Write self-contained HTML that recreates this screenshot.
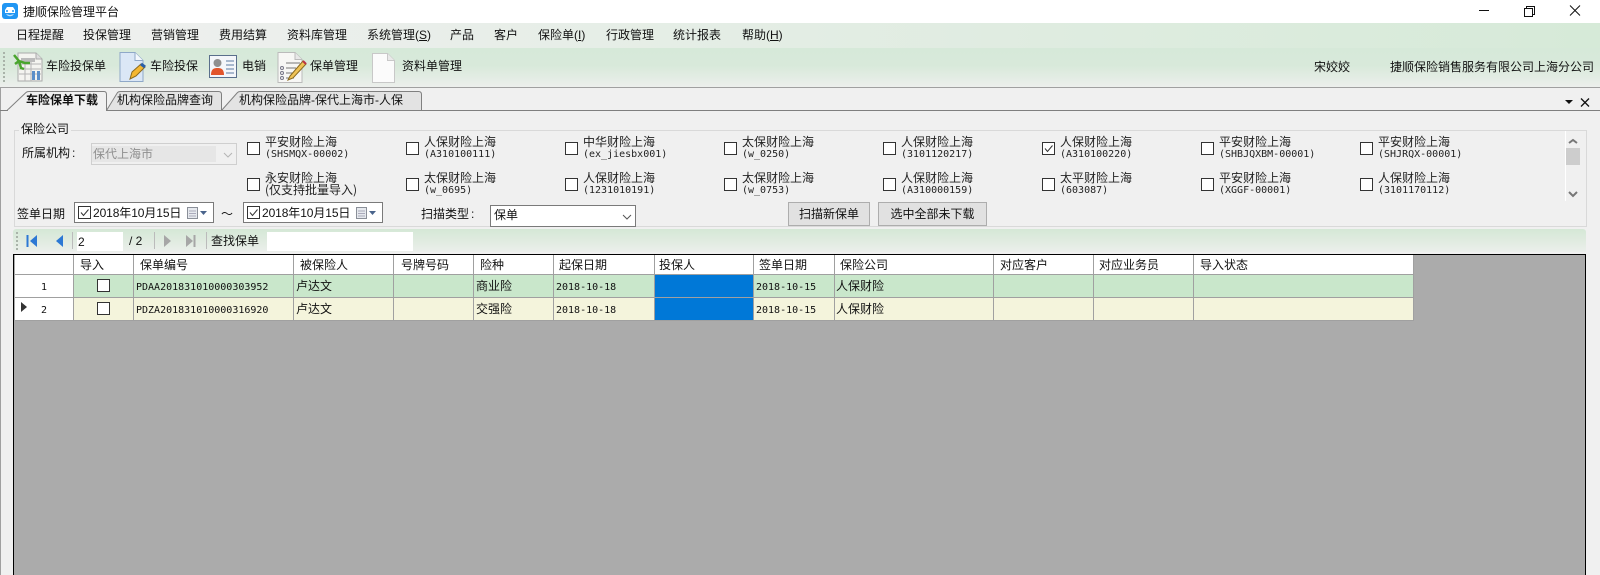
<!DOCTYPE html>
<html lang="zh"><head><meta charset="utf-8"><title>捷顺保险管理平台</title>
<style>
*{box-sizing:border-box}
html,body{margin:0;padding:0;width:1600px;height:575px;overflow:hidden;background:#f0f0f0}
body{position:relative;font:12px/14px "Liberation Sans","Noto Sans CJK SC",sans-serif;color:#111}
.a{position:absolute;white-space:nowrap}
.t{position:absolute;white-space:nowrap;line-height:14px;height:14px}
.cb{position:absolute;width:13px;height:13px;border:1px solid #333;background:#fff}
.n{position:absolute;white-space:nowrap;font:12px/12px "WenQuanYi Zen Hei","Noto Sans CJK SC",sans-serif;color:#222}
.c{position:absolute;white-space:nowrap;font:10px/12px "DejaVu Sans Mono","Liberation Mono",monospace;color:#222;margin-top:1px}
.v{position:absolute;top:255px;width:1px;height:66px;background:#a0a0a0}
.g{position:absolute;white-space:nowrap;font-size:12px;line-height:14px;color:#111}
.m{position:absolute;white-space:nowrap;font:10px/14px "DejaVu Sans Mono","Liberation Mono",monospace;color:#111;margin-top:2px}
svg{position:absolute;overflow:visible}
</style></head><body>

<!-- title bar -->
<div class="a" style="left:0;top:0;width:1600px;height:23px;background:#fff"></div>
<svg style="left:2px;top:3px" width="16" height="16" viewBox="0 0 16 16"><rect width="16" height="16" rx="3" fill="#2196f3"/><path d="M3 7l2-3h6l2 3v3H3z" fill="#fff"/><path d="M4 11c2 3 6 3 8 0l-4 1z" fill="#bfe3ff"/><circle cx="5" cy="8" r="1" fill="#2196f3"/><circle cx="11" cy="8" r="1" fill="#2196f3"/></svg>
<div class="t" style="left:23px;top:5px">捷顺保险管理平台</div>
<svg style="left:1478px;top:5px" width="110" height="12" fill="none" stroke="#111"><path d="M1 5.500H11"/><path d="M46.500 3.500h8v8h-8zM48.500 3.500v-2h8v8h-2"/><path d="M92 .5l10 10M102 .5l-10 10"/></svg>

<!-- menu -->
<div class="a" style="left:0;top:23px;width:1600px;height:25px;background:linear-gradient(90deg,#f0f0f0 0,#d6ead8 100%)"></div>
<div class="t" style="left:16px;top:28px">日程提醒</div>
<div class="t" style="left:83px;top:28px">投保管理</div>
<div class="t" style="left:151px;top:28px">营销管理</div>
<div class="t" style="left:219px;top:28px">费用结算</div>
<div class="t" style="left:287px;top:28px">资料库管理</div>
<div class="t" style="left:367px;top:28px">系统管理(<u>S</u>)</div>
<div class="t" style="left:450px;top:28px">产品</div>
<div class="t" style="left:494px;top:28px">客户</div>
<div class="t" style="left:538px;top:28px">保险单(<u>I</u>)</div>
<div class="t" style="left:606px;top:28px">行政管理</div>
<div class="t" style="left:673px;top:28px">统计报表</div>
<div class="t" style="left:742px;top:28px">帮助(<u>H</u>)</div>

<!-- toolbar -->
<div class="a" style="left:0;top:48px;width:1600px;height:39px;background:linear-gradient(180deg,#d6e9d9 0,#d8e9da 45%,#ecefec 100%)"></div>
<div class="a" style="left:0;top:87px;width:1600px;height:1px;background:#a0a0a0"></div>
<div class="a" style="left:3px;top:52px;width:2px;height:31px;background:repeating-linear-gradient(180deg,#a9b3a9 0 2px,transparent 2px 4px)"></div>

<svg style="left:12px;top:51px" width="32" height="32" viewBox="0 0 32 32"><path d="M6 2h18l6 6v22H6z" fill="#f4f4f0" stroke="#aaa"/><path d="M24 2v6h6" fill="#ddd" stroke="#aaa"/><path d="M7 13h22M7 18h22M7 23h22M13 9v21M19 9v21" stroke="#b5b5b5"/><rect x="9" y="7" width="14" height="4" fill="#bbb"/><rect x="20" y="20" width="3" height="9" fill="#5b8fc9"/><rect x="25" y="20" width="3" height="9" fill="#5b8fc9"/><path d="M2 4l5 6 6 2 5 0M3 13l4-3M7 10l2 7 3 1" fill="none" stroke="#4aa52e" stroke-width="2.500"/></svg>
<div class="t" style="left:46px;top:59px">车险投保单</div>

<svg style="left:119px;top:52px" width="26" height="31" viewBox="0 0 26 31"><path d="M1 .5h15l8 8v21H1z" fill="#dbe7f6" stroke="#8fa8c8"/><path d="M16 .5v8h8" fill="#f4f8fd" stroke="#8fa8c8"/><path d="M13 20l9-8 4 3-9 9-6 3z" fill="#f4b731" stroke="#8a6a1e"/><path d="M22 12l4 3" stroke="#2a5fa8" stroke-width="3"/></svg>
<div class="t" style="left:150px;top:59px">车险投保</div>

<svg style="left:209px;top:55px" width="28" height="23" viewBox="0 0 28 23"><rect x=".5" y=".5" width="27" height="22" fill="#f4f6fa" stroke="#5a6f8c"/><circle cx="8.500" cy="8" r="4" fill="#8f8f8f"/><path d="M2 20c0-6 3-7 6.500-7s6.500 1 6.500 7z" fill="#e2552b"/><path d="M17 6h8M17 10h8M17 14h8M17 18h8" stroke="#7b93b4" stroke-width="1.300"/></svg>
<div class="t" style="left:242px;top:59px">电销</div>

<svg style="left:277px;top:52px" width="31" height="31" viewBox="0 0 31 31"><path d="M1 .5h17l7 7v23H1z" fill="#f7f7f5" stroke="#bbb"/><path d="M18 .5v7h7" fill="#e8e8e8" stroke="#bbb"/><path d="M9 11h14M9 16h10M9 21h8M9 26h8" stroke="#777"/><circle cx="5" cy="16" r="1.500" fill="none" stroke="#778"/><circle cx="5" cy="21" r="1.500" fill="none" stroke="#778"/><circle cx="5" cy="26" r="1.500" fill="none" stroke="#778"/><path d="M13 24l13-15 3 3-13 14-5 2z" fill="#efc356" stroke="#8a6a1e"/><path d="M26 9l3 3" stroke="#b34" stroke-width="2"/></svg>
<div class="t" style="left:310px;top:59px">保单管理</div>

<svg style="left:372px;top:53px" width="23" height="30" viewBox="0 0 23 30"><path d="M.5 .5h15l7 7v22H.5z" fill="#fbfbfb" stroke="#c8c8c8"/><path d="M15.500 .5v7h7" fill="#e9e9e9" stroke="#c8c8c8"/></svg>
<div class="t" style="left:402px;top:59px">资料单管理</div>

<div class="t" style="left:1314px;top:60px">宋姣姣</div>
<div class="t" style="left:1390px;top:60px">捷顺保险销售服务有限公司上海分公司</div>

<!-- tabs -->
<div class="a" style="left:0;top:88px;width:1px;height:487px;background:#a0a0a0"></div>
<div class="a" style="left:0;top:110px;width:1600px;height:1px;background:#7f7f7f"></div>
<svg style="left:0;top:88px" width="440" height="24" fill="none">
<path d="M221.500 22.500l16-18q1-1 3-1h178q3 0 3 3v16z" fill="#e3e3e3" stroke="#808080"/>
<path d="M106.500 22.500l11-18q1-1 3-1h98q3 0 3 3v16z" fill="#e3e3e3" stroke="#808080"/>
<path d="M7 22.500l19-18q1-1 3-1h75q2.500 0 2.500 3v16.500" fill="#f0f0f0" stroke="#808080"/>
<path d="M8 22.500h98" stroke="#f0f0f0" stroke-width="1.500"/>
</svg>
<div class="t" style="left:26px;top:93px;font-weight:bold">车险保单下载</div>
<div class="t" style="left:117px;top:93px">机构保险品牌查询</div>
<div class="t" style="left:239px;top:93px">机构保险品牌-保代上海市-人保</div>
<svg style="left:1565px;top:98px" width="30" height="12"><path d="M0 2h8L4 6z" fill="#111"/><path d="M16 .5l8 8M24 .5l-8 8" stroke="#111" stroke-width="1.300" fill="none"/></svg>

<!-- group box -->
<div class="a" style="left:14px;top:130px;width:1573px;height:97px;border:1px solid #d9d9d9"></div>
<div class="a" style="left:19px;top:122px;background:#f0f0f0;padding:0 2px;line-height:15px">保险公司</div>
<div class="t" style="left:22px;top:146px">所属机构<span style="margin-left:2px">:</span></div>
<div class="a" style="left:91px;top:143px;width:146px;height:22px;border:1px solid #cfcfcf;background:#f0f0f0"></div>
<div class="a" style="left:92px;top:146px;width:124px;height:16px;background:#e6e6e6;color:#8f8f8f;line-height:16px;padding-left:1px">保代上海市</div>
<svg style="left:223px;top:152px" width="10" height="6" fill="none" stroke="#b5b5b5"><path d="M1 1l4 4 4-4"/></svg>

<!-- checkbox row 1 -->
<div class="cb" style="left:247px;top:142px"></div><div class="n" style="left:265px;top:136px">平安财险上海</div><div class="c" style="left:265px;top:148px">(SHSMQX-00002)</div>
<div class="cb" style="left:406px;top:142px"></div><div class="n" style="left:424px;top:136px">人保财险上海</div><div class="c" style="left:424px;top:148px">(A310100111)</div>
<div class="cb" style="left:565px;top:142px"></div><div class="n" style="left:583px;top:136px">中华财险上海</div><div class="c" style="left:583px;top:148px">(ex_jiesbx001)</div>
<div class="cb" style="left:724px;top:142px"></div><div class="n" style="left:742px;top:136px">太保财险上海</div><div class="c" style="left:742px;top:148px">(w_0250)</div>
<div class="cb" style="left:883px;top:142px"></div><div class="n" style="left:901px;top:136px">人保财险上海</div><div class="c" style="left:901px;top:148px">(3101120217)</div>
<div class="cb" style="left:1042px;top:142px"></div><svg style="left:1042px;top:142px" width="13" height="13" fill="none" stroke="#333"><path d="M3 6.500l2.500 3 5-6"/></svg><div class="n" style="left:1060px;top:136px">人保财险上海</div><div class="c" style="left:1060px;top:148px">(A310100220)</div>
<div class="cb" style="left:1201px;top:142px"></div><div class="n" style="left:1219px;top:136px">平安财险上海</div><div class="c" style="left:1219px;top:148px">(SHBJQXBM-00001)</div>
<div class="cb" style="left:1360px;top:142px"></div><div class="n" style="left:1378px;top:136px">平安财险上海</div><div class="c" style="left:1378px;top:148px">(SHJRQX-00001)</div>

<!-- checkbox row 2 -->
<div class="cb" style="left:247px;top:178px"></div><div class="n" style="left:265px;top:172px">永安财险上海</div><div class="n" style="left:265px;top:184px">(仅支持批量导入)</div>
<div class="cb" style="left:406px;top:178px"></div><div class="n" style="left:424px;top:172px">太保财险上海</div><div class="c" style="left:424px;top:184px">(w_0695)</div>
<div class="cb" style="left:565px;top:178px"></div><div class="n" style="left:583px;top:172px">人保财险上海</div><div class="c" style="left:583px;top:184px">(1231010191)</div>
<div class="cb" style="left:724px;top:178px"></div><div class="n" style="left:742px;top:172px">太保财险上海</div><div class="c" style="left:742px;top:184px">(w_0753)</div>
<div class="cb" style="left:883px;top:178px"></div><div class="n" style="left:901px;top:172px">人保财险上海</div><div class="c" style="left:901px;top:184px">(A310000159)</div>
<div class="cb" style="left:1042px;top:178px"></div><div class="n" style="left:1060px;top:172px">太平财险上海</div><div class="c" style="left:1060px;top:184px">(603087)</div>
<div class="cb" style="left:1201px;top:178px"></div><div class="n" style="left:1219px;top:172px">平安财险上海</div><div class="c" style="left:1219px;top:184px">(XGGF-00001)</div>
<div class="cb" style="left:1360px;top:178px"></div><div class="n" style="left:1378px;top:172px">人保财险上海</div><div class="c" style="left:1378px;top:184px">(3101170112)</div>

<!-- scrollbar -->
<div class="a" style="left:1565px;top:131px;width:1px;height:70px;background:#fff"></div>
<div class="a" style="left:1566px;top:148px;width:14px;height:17px;background:#cdcdcd"></div>
<svg style="left:1568px;top:138px" width="10" height="62" fill="none" stroke="#777" stroke-width="2"><path d="M1 5l4-3 4 3M1 54l4 4 4-4"/></svg>

<!-- dates -->
<div class="t" style="left:17px;top:207px;font-size:12px">签单日期</div>
<div class="a" style="left:74px;top:202px;width:140px;height:21px;border:1px solid #7a7a7a;background:#fff"></div>
<div class="cb" style="left:78px;top:206px"></div><svg style="left:78px;top:206px" width="13" height="13" fill="none" stroke="#333"><path d="M3 6.500l2.500 3 5-6"/></svg>
<div class="t" style="left:93px;top:206px;letter-spacing:-.1px">2018年10月15日</div>
<svg style="left:187px;top:207px" width="21" height="12"><rect x=".5" y=".5" width="10" height="11" fill="#e6e9ee" stroke="#8a8f98"/><path d="M2 4h7M2 6.500h7M2 9h7" stroke="#aab"/><path d="M13 4h7l-3.500 4z" fill="#4a648c"/></svg>
<div class="t" style="left:221px;top:207px">～</div>
<div class="a" style="left:243px;top:202px;width:140px;height:21px;border:1px solid #7a7a7a;background:#fff"></div>
<div class="cb" style="left:247px;top:206px"></div><svg style="left:247px;top:206px" width="13" height="13" fill="none" stroke="#333"><path d="M3 6.500l2.500 3 5-6"/></svg>
<div class="t" style="left:262px;top:206px;letter-spacing:-.1px">2018年10月15日</div>
<svg style="left:356px;top:207px" width="21" height="12"><rect x=".5" y=".5" width="10" height="11" fill="#e6e9ee" stroke="#8a8f98"/><path d="M2 4h7M2 6.500h7M2 9h7" stroke="#aab"/><path d="M13 4h7l-3.500 4z" fill="#4a648c"/></svg>

<div class="t" style="left:421px;top:207px">扫描类型<span style="margin-left:2px">:</span></div>
<div class="a" style="left:490px;top:205px;width:146px;height:22px;border:1px solid #7a7a7a;background:#fff;padding:2px 0 0 3px">保单</div>
<svg style="left:622px;top:214px" width="10" height="6" fill="none" stroke="#555"><path d="M1 1l4 4 4-4"/></svg>

<div class="a" style="left:788px;top:202px;width:82px;height:24px;border:1px solid #adadad;background:#e1e1e1;text-align:center;line-height:22px">扫描新保单</div>
<div class="a" style="left:878px;top:202px;width:109px;height:24px;border:1px solid #adadad;background:#e1e1e1;text-align:center;line-height:22px">选中全部未下载</div>

<!-- nav -->
<div class="a" style="left:13px;top:229px;width:1573px;height:23px;border-radius:3px 3px 0 0;background:linear-gradient(180deg,#d4e8d6 0,#e0ebe0 50%,#ebefeb 100%)"></div>
<div class="a" style="left:16px;top:232px;width:2px;height:18px;background:repeating-linear-gradient(180deg,#a9b3a9 0 2px,transparent 2px 4px)"></div>
<svg style="left:26px;top:234px" width="172" height="14"><path d="M1.500 1v12" stroke="#2c78d4" stroke-width="2"/><path d="M11 1v12L4 7z" fill="#2c78d4"/><path d="M37 1v12L30 7z" fill="#2c78d4"/><path d="M46.500 -2v17M128.500 -2v17M180.500 -2v17" stroke="#bbb"/><path d="M138 1v12l7-6z" fill="#a6a6a6"/><path d="M160 1v12l7-6z" fill="#a6a6a6"/><path d="M168.500 1v12" stroke="#a6a6a6" stroke-width="2"/></svg>
<div class="a" style="left:77px;top:232px;width:46px;height:19px;background:#fff;padding:3px 0 0 1px;font-size:12px">2</div>
<div class="t" style="left:129px;top:234px">/ 2</div>
<div class="t" style="left:211px;top:234px">查找保单</div>
<div class="a" style="left:267px;top:232px;width:146px;height:19px;background:#fff"></div>

<!-- grid -->
<div class="a" style="left:13px;top:254px;width:1573px;height:321px;background:#ababab;border:1px solid #000;border-width:1px 1px 0 1px"></div>
<div class="a" style="left:15px;top:255px;width:1398px;height:19px;background:#fff"></div>
<div class="a" style="left:15px;top:274px;width:58px;height:47px;background:#fff"></div>
<div class="a" style="left:73px;top:275px;width:1340px;height:22px;background:#c9e7cb"></div>
<div class="a" style="left:73px;top:298px;width:1340px;height:22px;background:#f4f4dc"></div>
<div class="a" style="left:15px;top:274px;width:1398px;height:1px;background:#a0a0a0"></div>
<div class="a" style="left:15px;top:297px;width:1398px;height:1px;background:#a0a0a0"></div>
<div class="a" style="left:15px;top:320px;width:1398px;height:1px;background:#a0a0a0"></div>
<div class="a" style="left:654px;top:275px;width:99px;height:22px;background:#0078d7"></div>
<div class="a" style="left:654px;top:298px;width:99px;height:22px;background:#0078d7"></div>
<i class="v" style="left:73px"></i><i class="v" style="left:133px"></i><i class="v" style="left:293px"></i><i class="v" style="left:393px"></i><i class="v" style="left:473px"></i><i class="v" style="left:553px"></i><i class="v" style="left:654px"></i><i class="v" style="left:753px"></i><i class="v" style="left:834px"></i><i class="v" style="left:993px"></i><i class="v" style="left:1093px"></i><i class="v" style="left:1193px"></i><i class="v" style="left:1413px"></i>

<div class="g" style="left:80px;top:258px">导入</div>
<div class="g" style="left:140px;top:258px">保单编号</div>
<div class="g" style="left:300px;top:258px">被保险人</div>
<div class="g" style="left:401px;top:258px">号牌号码</div>
<div class="g" style="left:480px;top:258px">险种</div>
<div class="g" style="left:559px;top:258px">起保日期</div>
<div class="g" style="left:659px;top:258px">投保人</div>
<div class="g" style="left:759px;top:258px">签单日期</div>
<div class="g" style="left:840px;top:258px">保险公司</div>
<div class="g" style="left:1000px;top:258px">对应客户</div>
<div class="g" style="left:1099px;top:258px">对应业务员</div>
<div class="g" style="left:1200px;top:258px">导入状态</div>

<div class="m" style="left:41px;top:279px">1</div>
<div class="cb" style="left:97px;top:279px"></div>
<div class="m" style="left:136px;top:279px">PDAA201831010000303952</div>
<div class="g" style="left:296px;top:279px">卢达文</div>
<div class="g" style="left:476px;top:279px">商业险</div>
<div class="m" style="left:556px;top:279px">2018-10-18</div>
<div class="m" style="left:756px;top:279px">2018-10-15</div>
<div class="g" style="left:836px;top:279px">人保财险</div>

<svg style="left:21px;top:302px" width="6" height="10"><path d="M0 0v10l6-5z" fill="#333"/></svg>
<div class="m" style="left:41px;top:302px">2</div>
<div class="cb" style="left:97px;top:302px"></div>
<div class="m" style="left:136px;top:302px">PDZA201831010000316920</div>
<div class="g" style="left:296px;top:302px">卢达文</div>
<div class="g" style="left:476px;top:302px">交强险</div>
<div class="m" style="left:556px;top:302px">2018-10-18</div>
<div class="m" style="left:756px;top:302px">2018-10-15</div>
<div class="g" style="left:836px;top:302px">人保财险</div>

</body></html>
